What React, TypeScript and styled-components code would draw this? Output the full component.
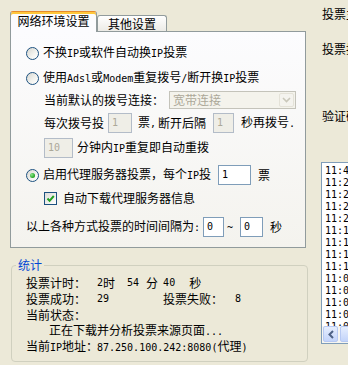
import React from "react";
import styled, { createGlobalStyle, css } from "styled-components";

const GlobalStyle = createGlobalStyle`
  html, body { margin: 0; padding: 0; }
  body {
    width: 348px; height: 365px; overflow: hidden;
    background: #ECE9D8;
    font-family: "Noto Sans CJK SC", "Noto Sans", sans-serif;
    font-size: 12px; line-height: 16px; color: #000;
  }
  #root { width: 348px; height: 365px; overflow: hidden; }
`;

const Screen = styled.div`
  display: flex; align-items: flex-start;
  width: 348px; height: 365px; overflow: hidden;
  box-sizing: border-box; padding-left: 10px;
`;

const Left = styled.div`
  display: flex; flex-direction: column; flex: none;
  width: 297px; padding-top: 11px;
`;

const TabStrip = styled.div`
  display: flex; align-items: flex-end; height: 20px;
`;

const Tab = styled.div<{ $active?: boolean }>`
  box-sizing: border-box;
  display: flex; align-items: center; justify-content: center;
  white-space: nowrap;
  border: 1px solid #919B9C; border-bottom: none;
  border-radius: 3px 3px 0 0;
  ${(p) =>
    p.$active
      ? css`
          position: relative; z-index: 1;
          width: 87px; height: 21px; margin-bottom: -1px;
          padding-bottom: 2px;
          border-top: 1px solid #E68B2C;
          box-shadow: inset 0 2px 0 #FFC83C;
          background: #FCFCFE;
        `
      : css`
          width: 70px; height: 16px; padding-top: 1px;
          background: linear-gradient(#FFFFFF, #ECEBE6);
        `}
`;

const Panel = styled.div`
  box-sizing: border-box; width: 296px;
  border: 1px solid #919B9C;
  background: linear-gradient(#FCFCFE, #F4F3EE);
  padding: 11px 0 10px 0;
  display: flex; flex-direction: column;
`;

const Row = styled.div<{ $mt?: number; $pl: number }>`
  display: flex; align-items: center; height: 20px;
  margin-top: ${(p) => p.$mt ?? 0}px;
  padding-left: ${(p) => p.$pl}px;
  white-space: nowrap;
`;

const T = styled.span<{ $ml?: number; $gray?: boolean }>`
  white-space: nowrap;
  margin-left: ${(p) => p.$ml ?? 0}px;
  color: ${(p) => (p.$gray ? "#ACA899" : "inherit")};
`;

const M = styled.span`
  font-family: "DejaVu Sans Mono", "Liberation Mono", monospace;
  font-size: 10px;
`;

const Radio = styled.span<{ $checked?: boolean }>`
  box-sizing: border-box; flex: none;
  width: 13px; height: 13px; margin-right: 4px;
  border: 1px solid #1C5180; border-radius: 50%;
  background: linear-gradient(135deg, #D6D6D0 0%, #F4F4F0 60%, #FFFFFF 100%);
  display: flex; align-items: center; justify-content: center;
  &::after {
    content: "";
    width: 5px; height: 5px; border-radius: 50%;
    background: radial-gradient(circle at 35% 35%, #8BE88B, #21A121 70%);
    display: ${(p) => (p.$checked ? "block" : "none")};
  }
`;

const CheckBox = styled.span`
  box-sizing: border-box; flex: none;
  width: 13px; height: 13px; margin-right: 6px;
  border: 1px solid #1C5180;
  background: linear-gradient(135deg, #DCDCD7 0%, #FFFFFF 100%);
  display: flex; align-items: center; justify-content: center;
`;

const Field = styled.span<{ $w: number; $off?: boolean; $ml?: number; $mr?: number }>`
  box-sizing: border-box; flex: none;
  display: flex; align-items: center;
  width: ${(p) => p.$w}px; height: 20px;
  margin-left: ${(p) => p.$ml ?? 0}px;
  margin-right: ${(p) => p.$mr ?? 0}px;
  padding-left: 3px;
  border: 1px solid ${(p) => (p.$off ? "#B3BCC8" : "#7F9DB9")};
  background: ${(p) => (p.$off ? "#EFEEE7" : "#FFFFFF")};
  color: ${(p) => (p.$off ? "#ACA899" : "#000")};
  font-family: "DejaVu Sans Mono", "Liberation Mono", monospace;
  font-size: 10px;
`;

const Select = styled.div`
  box-sizing: border-box; flex: none;
  width: 127px; height: 18px; margin-left: 5px;
  display: flex; align-items: center; justify-content: space-between;
  border: 1px solid #C4C3BA; background: #F4F3EC; color: #ACA899;
  padding: 1px 1px 1px 3px;
`;

const DropBtn = styled.span`
  box-sizing: border-box;
  width: 15px; height: 14px;
  display: flex; align-items: center; justify-content: center;
  border: 1px solid #E4E2D8; border-radius: 2px;
  background: #F4F3EE;
`;

const Group = styled.fieldset`
  box-sizing: border-box; width: 297px; min-width: 0;
  margin: 10px 0 0 1px;
  border: 1px solid #D0D0BF; border-radius: 4px;
  padding: 3px 0 6px 0;
`;

const GroupTitle = styled.legend`
  color: #0046D5; padding: 0 2px; margin-left: 4px;
  line-height: 14px;
`;

const StatsBody = styled.div`
  display: flex; flex-direction: column; padding-left: 14px;
`;

const StatRow = styled.div<{ $indent?: number }>`
  display: flex; align-items: center; height: 16px;
  padding-left: ${(p) => p.$indent ?? 0}px;
  white-space: nowrap;
`;

const StatLabel = styled.span`
  flex: none; width: 71px; white-space: nowrap;
`;

const Seg = styled.span<{ $ml?: number; $mono?: boolean }>`
  white-space: nowrap;
  margin-left: ${(p) => p.$ml ?? 0}px;
  ${(p) =>
    p.$mono &&
    css`
      font-family: "DejaVu Sans Mono", "Liberation Mono", monospace;
      font-size: 10px;
    `}
`;

const Right = styled.div`
  flex: none; width: 150px; margin-left: 14px;
  display: flex; flex-direction: column;
  padding-top: 6px;
`;

const RLabel = styled.div<{ $mt?: number }>`
  margin-top: ${(p) => p.$mt ?? 0}px;
  padding-left: 1px;
  white-space: nowrap;
  line-height: 16px;
`;

const LogList = styled.div`
  box-sizing: border-box;
  margin-top: 38px; height: 182px;
  border: 1px solid #7F9DB9; background: #FFFFFF;
  display: flex; flex-direction: column;
`;

const LogLines = styled.div`
  flex: 1; overflow: hidden;
  padding: 2px 0 0 3px;
  font-family: "DejaVu Sans Mono", "Liberation Mono", monospace;
  font-size: 10px; line-height: 12px;
  white-space: nowrap;
`;

const HScroll = styled.div`
  flex: none; height: 16px;
  display: flex; align-items: stretch; gap: 2px;
  padding: 0 0 1px 1px;
  background: #F6F5F0;
`;

const ScrollBtn = styled.span<{ $thumb?: boolean }>`
  box-sizing: border-box; flex: none;
  width: ${(p) => (p.$thumb ? "60px" : "15px")};
  display: flex; align-items: center; justify-content: center;
  border: 1px solid #B7C9F3; border-radius: 2px;
  background: linear-gradient(#E6EEFE, #C3D4FA);
`;

const logs = [
  "11:45:21 投票成功",
  "11:28:43 投票成功",
  "11:26:10 投票成功",
  "11:24:37 投票成功",
  "11:21:05 投票成功",
  "11:19:52 投票成功",
  "11:16:18 投票成功",
  "11:14:40 投票成功",
  "11:11:03 投票成功",
  "11:09:27 投票成功",
  "11:07:55 投票成功",
  "11:05:12 投票成功",
  "11:03:38 投票成功",
  "11:01:06 投票成功",
];

export default function App() {
  return (
    <>
      <GlobalStyle />
      <Screen>
        <Left>
          <TabStrip>
            <Tab $active>网络环境设置</Tab>
            <Tab>其他设置</Tab>
          </TabStrip>
          <Panel>
            <Row $pl={15}>
              <Radio />
              <T>
                不换<M>IP</M>或软件自动换<M>IP</M>投票
              </T>
            </Row>
            <Row $mt={5} $pl={15}>
              <Radio />
              <T>
                使用<M>Adsl</M>或<M>Modem</M>重复拨号<M>/</M>断开换<M>IP</M>投票
              </T>
            </Row>
            <Row $mt={2} $pl={33}>
              <T>当前默认的拨号连接：</T>
              <Select>
                <T $gray>宽带连接</T>
                <DropBtn>
                  <svg width="9" height="6" viewBox="0 0 9 6">
                    <polyline points="1,1 4.5,4.5 8,1" fill="none" stroke="#C9C7BA" strokeWidth="1.6" />
                  </svg>
                </DropBtn>
              </Select>
            </Row>
            <Row $mt={3} $pl={33}>
              <T>每次拨号投</T>
              <Field $w={24} $ml={4} $mr={6} $off>1</Field>
              <T>
                票<M>,</M>
              </T>
              <T $ml={2}>断开后隔</T>
              <Field $w={21} $ml={7} $mr={7} $off>1</Field>
              <T>
                秒再拨号<M>.</M>
              </T>
            </Row>
            <Row $mt={5} $pl={33}>
              <Field $w={29} $mr={4} $off>10</Field>
              <T>
                分钟内<M>IP</M>重复即自动重拨
              </T>
            </Row>
            <Row $mt={7} $pl={15}>
              <Radio $checked />
              <T>
                启用代理服务器投票，每个<M>IP</M>投
              </T>
              <Field $w={33} $ml={7} $mr={7}>1</Field>
              <T>票</T>
            </Row>
            <Row $mt={3} $pl={33}>
              <CheckBox>
                <svg width="9" height="9" viewBox="0 0 9 9">
                  <polyline points="1.5,4.5 3.6,6.8 7.8,2" fill="none" stroke="#21A121" strokeWidth="2" />
                </svg>
              </CheckBox>
              <T>自动下载代理服务器信息</T>
            </Row>
            <Row $mt={9} $pl={15}>
              <T>
                以上各种方式投票的时间间隔为<M>:</M>
              </T>
              <Field $w={21} $ml={3}>0</Field>
              <T $ml={3}>
                <M>~</M>
              </T>
              <Field $w={23} $ml={7} $mr={7}>0</Field>
              <T>秒</T>
            </Row>
          </Panel>
          <Group>
            <GroupTitle>统计</GroupTitle>
            <StatsBody>
              <StatRow>
                <StatLabel>投票计时：</StatLabel>
                <Seg $mono>2</Seg>
                <Seg>时</Seg>
                <Seg $mono $ml={12}>54</Seg>
                <Seg $ml={7}>分</Seg>
                <Seg $mono $ml={5}>40</Seg>
                <Seg $ml={14}>秒</Seg>
              </StatRow>
              <StatRow>
                <StatLabel>投票成功：</StatLabel>
                <Seg $mono>29</Seg>
                <Seg $ml={54}>投票失败：</Seg>
                <Seg $mono $ml={12}>8</Seg>
              </StatRow>
              <StatRow>
                <StatLabel>当前状态：</StatLabel>
              </StatRow>
              <StatRow $indent={23}>
                <Seg>
                  正在下载并分析投票来源页面<M>...</M>
                </Seg>
              </StatRow>
              <StatRow>
                <StatLabel>
                  当前<M>IP</M>地址：
                </StatLabel>
                <Seg>
                  <M>87.250.100.242:8080(</M>代理<M>)</M>
                </Seg>
              </StatRow>
            </StatsBody>
          </Group>
        </Left>
        <Right>
          <RLabel>投票主页：</RLabel>
          <RLabel $mt={19}>投票按钮：</RLabel>
          <RLabel $mt={51}>验证码：</RLabel>
          <LogList>
            <LogLines>
              {logs.map((l) => (
                <div key={l}>{l}</div>
              ))}
            </LogLines>
            <HScroll>
              <ScrollBtn>
                <svg width="8" height="9" viewBox="0 0 8 9">
                  <polyline points="6,1 2.5,4.5 6,8" fill="none" stroke="#4D6185" strokeWidth="2" />
                </svg>
              </ScrollBtn>
              <ScrollBtn $thumb />
            </HScroll>
          </LogList>
        </Right>
      </Screen>
    </>
  );
}
